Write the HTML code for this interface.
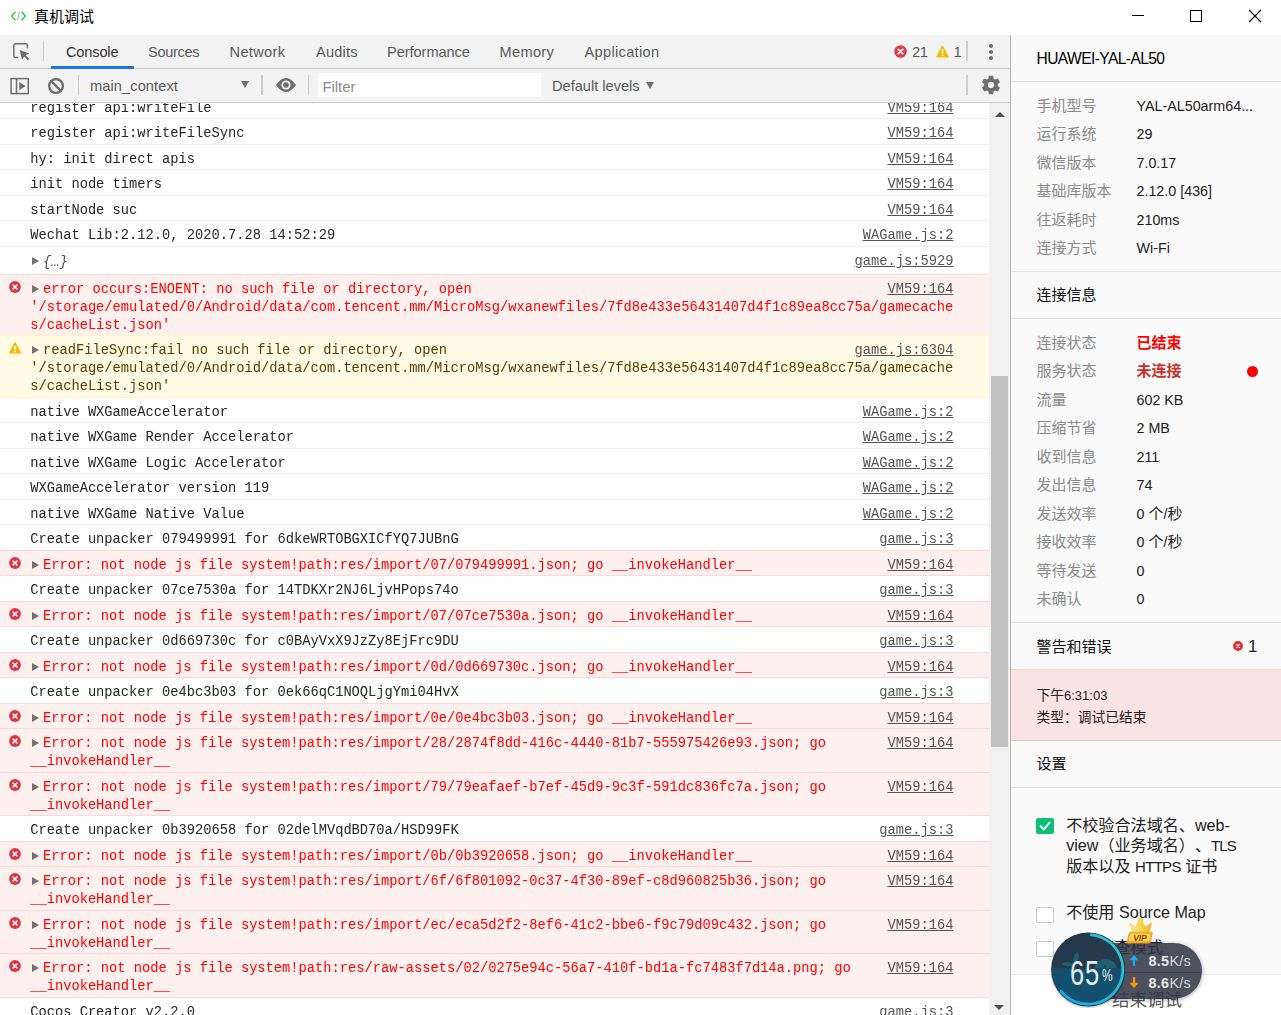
<!DOCTYPE html>
<html lang="zh-CN">
<head>
<meta charset="utf-8">
<title>真机调试</title>
<style>
*{box-sizing:border-box;margin:0;padding:0}
html,body{width:1281px;height:1015px;overflow:hidden;background:#fff}
body{position:relative;text-spacing-trim:space-all;font-family:"Liberation Sans","Noto Sans CJK SC",sans-serif;color:#000}
.abs{position:absolute}
.t{position:absolute;white-space:nowrap;line-height:20px}
/* title bar */
#titlebar{position:absolute;left:0;top:0;width:1281px;height:35px;background:#fff}
/* devtools */
#dt{position:absolute;left:0;top:35px;width:1010px;height:980px;background:#fff;overflow:hidden}
#tabbar{position:absolute;left:0;top:0;width:1010px;height:34px;background:#f3f3f3;border-bottom:1px solid #ccc}
#toolbar{position:absolute;left:0;top:34px;width:1010px;height:34px;background:#f3f3f3;border-bottom:1px solid #ccc}
.tab{position:absolute;top:7px;font-size:14.6px;line-height:20px;color:#5a5a5a;white-space:nowrap}
.sep{position:absolute;width:1px;background:#ccc}
#msgs{position:absolute;left:0;top:68px;width:989px;height:912px;overflow:hidden;will-change:transform;
 font-family:"Liberation Mono",monospace;font-size:13.745px;line-height:18px;color:#262626}
.row{position:absolute;left:0;width:989px;border-top:1px solid #f0f0f0;background:#fff}
.row.e{background:#fff0f0;border-top-color:#ffd6d6;color:#ff0000}
.row.w{background:#fffbe5;border-top-color:#fff5c2;color:#5c3c00}
.row.ae{border-top-color:#ffd6d6}
.row.aw{border-top-color:#fff5c2}
.row .m{position:absolute;left:30.2px;top:6px;white-space:pre}
.row .a{position:absolute;right:35.6px;top:6px;color:#545454;text-decoration:underline;white-space:pre}
.row .tri{position:absolute;left:32.4px;top:9.8px;width:0;height:0;border-left:7.2px solid #727272;border-top:4.4px solid transparent;border-bottom:4.4px solid transparent}
.row .ei{position:absolute;left:9px;top:5.9px;width:12px;height:12px}
#sbar{position:absolute;left:989px;top:68px;width:21px;height:912px;background:#f1f1f1}
#dtborder{position:absolute;left:1010px;top:35px;width:1px;height:980px;background:#b4b4b4}
/* right panel */
#rp{position:absolute;left:1011px;top:35px;width:270px;height:980px;background:#fafafa;overflow:hidden;font-size:15px;color:#222}
#rp .hl{position:absolute;left:0;width:270px;height:1px;background:#e4e4e4}
#rp .k{position:absolute;left:25.5px;color:#8a8a8a;white-space:nowrap;line-height:20px;font-size:15px}
#rp .v{position:absolute;left:125.5px;color:#222;white-space:nowrap;line-height:20px;font-size:14.3px}
#rp .h{position:absolute;left:25.5px;color:#111;white-space:nowrap;line-height:20px;font-size:15px}
</style>
</head>
<body>
<div id="titlebar">
  <svg class="abs" style="left:10.4px;top:9px" width="17" height="14" viewBox="0 0 17 14">
    <path d="M5 3.2 L1.6 7 L5 10.8" fill="none" stroke="#3fc24a" stroke-width="1.5" stroke-linecap="round" stroke-linejoin="round"/>
    <path d="M12 3.2 L15.4 7 L12 10.8" fill="none" stroke="#3fc24a" stroke-width="1.5" stroke-linecap="round" stroke-linejoin="round"/>
    <path d="M9.4 3.4 L7.6 10.6" fill="none" stroke="#7ad77f" stroke-width="1.2" stroke-linecap="round"/>
  </svg>
  <div class="t" style="left:34px;top:6.7px;font-size:15px;color:#000">真机调试</div>
  <div class="abs" style="left:1132px;top:15px;width:12px;height:1px;background:#000"></div>
  <div class="abs" style="left:1190px;top:10px;width:12px;height:12px;border:1px solid #000"></div>
  <svg class="abs" style="left:1248px;top:9px" width="14" height="14" viewBox="0 0 14 14"><path d="M1 1 L13 13 M13 1 L1 13" stroke="#000" stroke-width="1.1" fill="none"/></svg>
</div>
<div id="dt">
 <div id="tabbar">
  <svg class="abs" style="left:12px;top:7px" width="19" height="19" viewBox="0 0 19 19">
    <path d="M6.4 15.4 H3.4 Q1.8 15.4 1.8 13.8 V3.4 Q1.8 1.8 3.4 1.8 H13.8 Q15.4 1.8 15.4 3.4 V6.4" fill="none" stroke="#6e6e6e" stroke-width="1.5"/>
    <path d="M7.6 8 L17.4 11.4 L13.6 13.1 L17.2 16.9 L15.8 18.2 L12.2 14.4 L10 17.6 Z" fill="#6e6e6e"/>
  </svg>
  <div class="sep" style="left:43px;top:6px;height:20px"></div>
  <div class="tab" style="left:66px;color:#333;letter-spacing:-0.17px">Console</div>
  <div class="tab" style="left:148px;letter-spacing:-0.34px">Sources</div>
  <div class="tab" style="left:229.5px;letter-spacing:0.34px">Network</div>
  <div class="tab" style="left:316px;letter-spacing:0.18px">Audits</div>
  <div class="tab" style="left:387px;letter-spacing:-0.06px">Performance</div>
  <div class="tab" style="left:499.5px;letter-spacing:0.33px">Memory</div>
  <div class="tab" style="left:584.5px;letter-spacing:0.32px">Application</div>
  <div class="abs" style="left:51px;top:31px;width:83px;height:3px;background:#1a73e8"></div>
  <!-- error / warning counters -->
  <svg class="abs" style="left:894px;top:10px" width="13" height="13" viewBox="0 0 13 13">
    <circle cx="6.5" cy="6.5" r="6.3" fill="#e23b46"/>
    <path d="M4.3 4.3 L8.7 8.7 M8.7 4.3 L4.3 8.7" stroke="#fff" stroke-width="1.7" stroke-linecap="round"/>
  </svg>
  <div class="tab" style="left:912px;font-size:14.8px;letter-spacing:-0.6px;color:#5a5a5a">21</div>
  <svg class="abs" style="left:935.5px;top:9.5px" width="13" height="13" viewBox="0 0 13 13">
    <path d="M6.5 0.8 L12.4 11.9 H0.6 Z" fill="#f4bd00" stroke="#f4bd00" stroke-width="1" stroke-linejoin="round"/>
    <rect x="5.7" y="4.2" width="1.6" height="4.2" fill="#fff"/>
    <rect x="5.7" y="9.4" width="1.6" height="1.6" fill="#fff"/>
  </svg>
  <div class="tab" style="left:953.5px;font-size:14.8px;color:#5a5a5a">1</div>
  <div class="sep" style="left:966px;top:6px;height:20px;width:2px;background:#d0d0d0"></div>
  <div class="abs" style="left:989px;top:8.5px;width:4px;height:4px;border-radius:50%;background:#6e6e6e"></div>
  <div class="abs" style="left:989px;top:14.5px;width:4px;height:4px;border-radius:50%;background:#6e6e6e"></div>
  <div class="abs" style="left:989px;top:20.5px;width:4px;height:4px;border-radius:50%;background:#6e6e6e"></div>
 </div>
 <div id="toolbar">
  <!-- sidebar toggle -->
  <svg class="abs" style="left:9px;top:7.5px" width="21" height="18" viewBox="0 0 21 18">
    <rect x="2.1" y="1.6" width="17.2" height="15" fill="none" stroke="#6e6e6e" stroke-width="1.5"/>
    <path d="M7.5 1.6 V16.6" stroke="#6e6e6e" stroke-width="1.5"/>
    <path d="M10.3 5 L16.5 9.1 L10.3 13.2 Z" fill="#6e6e6e"/>
  </svg>
  <!-- clear -->
  <svg class="abs" style="left:47px;top:7.5px" width="18" height="18" viewBox="0 0 18 18">
    <circle cx="9" cy="9" r="6.9" fill="none" stroke="#6e6e6e" stroke-width="2.4"/>
    <path d="M4.2 4.2 L13.8 13.8" stroke="#6e6e6e" stroke-width="2.4"/>
  </svg>
  <div class="sep" style="left:78px;top:6px;height:20px"></div>
  <div class="tab" style="left:90px;top:7px;color:#5a5a5a;font-size:14.6px;letter-spacing:0.1px">main_context</div>
  <div class="abs" style="left:241px;top:12.2px;width:0;height:0;border-top:7.4px solid #6e6e6e;border-left:4.7px solid transparent;border-right:4.7px solid transparent"></div>
  <div class="sep" style="left:261px;top:6px;height:20px;width:2px"></div>
  <!-- eye -->
  <svg class="abs" style="left:274.5px;top:7.2px" width="22" height="18" viewBox="0 0 22 18">
    <path d="M1 9 Q6 2 11 2 Q16 2 21 9 Q16 16 11 16 Q6 16 1 9 Z" fill="#6e6e6e"/>
    <circle cx="11" cy="9" r="4.6" fill="#f3f3f3"/>
    <circle cx="11" cy="9" r="2.8" fill="#6e6e6e"/>
  </svg>
  <div class="sep" style="left:308px;top:6px;height:20px"></div>
  <div class="abs" style="left:318px;top:4px;width:223px;height:24px;background:#fff"></div>
  <div class="tab" style="left:322.5px;top:7.5px;color:#8a8a8a;font-size:14.8px">Filter</div>
  <div class="tab" style="left:552px;top:7px;color:#5a5a5a;font-size:14.6px">Default levels</div>
  <div class="abs" style="left:646px;top:12.6px;width:0;height:0;border-top:7.6px solid #6e6e6e;border-left:4.5px solid transparent;border-right:4.5px solid transparent"></div>
  <div class="sep" style="left:966px;top:6px;height:20px;width:2px;background:#d0d0d0"></div>
  <!-- gear -->
  <svg class="abs" style="left:979.6px;top:5px" width="22" height="22" viewBox="0 0 24 24">
    <path fill="#6e6e6e" d="M19.43 12.98c.04-.32.07-.64.07-.98s-.03-.66-.07-.98l2.11-1.65c.19-.15.24-.42.12-.64l-2-3.46c-.12-.22-.39-.3-.61-.22l-2.49 1c-.52-.4-1.08-.73-1.69-.98l-.38-2.65C14.46 2.18 14.25 2 14 2h-4c-.25 0-.46.18-.49.42l-.38 2.65c-.61.25-1.17.59-1.69.98l-2.49-1c-.23-.09-.49 0-.61.22l-2 3.46c-.13.22-.07.49.12.64l2.11 1.65c-.04.32-.07.65-.07.98s.03.66.07.98l-2.11 1.65c-.19.15-.24.42-.12.64l2 3.46c.12.22.39.3.61.22l2.49-1c.52.4 1.08.73 1.69.98l.38 2.65c.03.24.24.42.49.42h4c.25 0 .46-.18.49-.42l.38-2.65c.61-.25 1.17-.59 1.69-.98l2.49 1c.23.09.49 0 .61-.22l2-3.46c.12-.22.07-.49-.12-.64l-2.11-1.65zM12 15.5c-1.93 0-3.500-1.570-3.500-3.500s1.570-3.500 3.500-3.500 3.500 1.570 3.500 3.500-1.570 3.500-3.500 3.500z"/>
  </svg>
 </div>
<div id="msgs">
<div class="row" style="top:-10px;height:25px"><div class="m">register api:writeFile</div><span class="a">VM59:164</span></div>
<div class="row" style="top:15px;height:26px"><div class="m">register api:writeFileSync</div><span class="a">VM59:164</span></div>
<div class="row" style="top:41px;height:25px"><div class="m">hy: init direct apis</div><span class="a">VM59:164</span></div>
<div class="row" style="top:66px;height:26px"><div class="m">init node timers</div><span class="a">VM59:164</span></div>
<div class="row" style="top:92px;height:25px"><div class="m">startNode suc</div><span class="a">VM59:164</span></div>
<div class="row" style="top:117px;height:26px"><div class="m">Wechat Lib:2.12.0, 2020.7.28 14:52:29</div><span class="a">WAGame.js:2</span></div>
<div class="row" style="top:143px;height:28px"><i class="tri"></i><div class="m"><span style="display:inline-block;width:12.9px"></span><i style="position:relative;top:1px;color:#4d4d4d">{…}</i></div><span class="a">game.js:5929</span></div>
<div class="row e" style="top:171px;height:61px"><svg class="ei" viewBox="0 0 12 12"><circle cx="6" cy="6" r="5.9" fill="#dc3545"/><path d="M4.1 4.1 L7.9 7.9 M7.9 4.1 L4.1 7.9" stroke="#fff" stroke-width="1.5" stroke-linecap="round"/></svg><i class="tri"></i><div class="m"><span style="display:inline-block;width:12.9px"></span>error occurs:ENOENT: no such file or directory, open<br>'/storage/emulated/0/Android/data/com.tencent.mm/MicroMsg/wxanewfiles/7fd8e433e56431407d4f1c89ea8cc75a/gamecache<br>s/cacheList.json'</div><span class="a">VM59:164</span></div>
<div class="row w" style="top:232px;height:62px"><svg class="ei" style="top:5.8px" viewBox="0 0 12 12"><path d="M6 0.9 L11.3 10.9 H0.7 Z" fill="#f4bd00" stroke="#f4bd00" stroke-width="1.2" stroke-linejoin="round"/><rect x="5.2" y="3.8" width="1.6" height="4" fill="#fff"/><rect x="5.2" y="8.7" width="1.6" height="1.6" fill="#fff"/></svg><i class="tri"></i><div class="m"><span style="display:inline-block;width:12.9px"></span>readFileSync:fail no such file or directory, open<br>'/storage/emulated/0/Android/data/com.tencent.mm/MicroMsg/wxanewfiles/7fd8e433e56431407d4f1c89ea8cc75a/gamecache<br>s/cacheList.json'</div><span class="a">game.js:6304</span></div>
<div class="row aw" style="top:294px;height:25px"><div class="m">native WXGameAccelerator</div><span class="a">WAGame.js:2</span></div>
<div class="row" style="top:319px;height:26px"><div class="m">native WXGame Render Accelerator</div><span class="a">WAGame.js:2</span></div>
<div class="row" style="top:345px;height:25px"><div class="m">native WXGame Logic Accelerator</div><span class="a">WAGame.js:2</span></div>
<div class="row" style="top:370px;height:26px"><div class="m">WXGameAccelerator version 119</div><span class="a">WAGame.js:2</span></div>
<div class="row" style="top:396px;height:25px"><div class="m">native WXGame Native Value</div><span class="a">WAGame.js:2</span></div>
<div class="row" style="top:421px;height:26px"><div class="m">Create unpacker 079499991 for 6dkeWRTOBGXICfYQ7JUBnG</div><span class="a">game.js:3</span></div>
<div class="row e" style="top:447px;height:25px"><svg class="ei" viewBox="0 0 12 12"><circle cx="6" cy="6" r="5.9" fill="#dc3545"/><path d="M4.1 4.1 L7.9 7.9 M7.9 4.1 L4.1 7.9" stroke="#fff" stroke-width="1.5" stroke-linecap="round"/></svg><i class="tri"></i><div class="m"><span style="display:inline-block;width:12.9px"></span>Error: not node js file system!path:res/import/07/079499991.json; go __invokeHandler__</div><span class="a">VM59:164</span></div>
<div class="row ae" style="top:472px;height:26px"><div class="m">Create unpacker 07ce7530a for 14TDKXr2NJ6LjvHPops74o</div><span class="a">game.js:3</span></div>
<div class="row e" style="top:498px;height:25px"><svg class="ei" viewBox="0 0 12 12"><circle cx="6" cy="6" r="5.9" fill="#dc3545"/><path d="M4.1 4.1 L7.9 7.9 M7.9 4.1 L4.1 7.9" stroke="#fff" stroke-width="1.5" stroke-linecap="round"/></svg><i class="tri"></i><div class="m"><span style="display:inline-block;width:12.9px"></span>Error: not node js file system!path:res/import/07/07ce7530a.json; go __invokeHandler__</div><span class="a">VM59:164</span></div>
<div class="row ae" style="top:523px;height:26px"><div class="m">Create unpacker 0d669730c for c0BAyVxX9JzZy8EjFrc9DU</div><span class="a">game.js:3</span></div>
<div class="row e" style="top:549px;height:25px"><svg class="ei" viewBox="0 0 12 12"><circle cx="6" cy="6" r="5.9" fill="#dc3545"/><path d="M4.1 4.1 L7.9 7.9 M7.9 4.1 L4.1 7.9" stroke="#fff" stroke-width="1.5" stroke-linecap="round"/></svg><i class="tri"></i><div class="m"><span style="display:inline-block;width:12.9px"></span>Error: not node js file system!path:res/import/0d/0d669730c.json; go __invokeHandler__</div><span class="a">VM59:164</span></div>
<div class="row ae" style="top:574px;height:26px"><div class="m">Create unpacker 0e4bc3b03 for 0ek66qC1NOQLjgYmi04HvX</div><span class="a">game.js:3</span></div>
<div class="row e" style="top:600px;height:25px"><svg class="ei" viewBox="0 0 12 12"><circle cx="6" cy="6" r="5.9" fill="#dc3545"/><path d="M4.1 4.1 L7.9 7.9 M7.9 4.1 L4.1 7.9" stroke="#fff" stroke-width="1.5" stroke-linecap="round"/></svg><i class="tri"></i><div class="m"><span style="display:inline-block;width:12.9px"></span>Error: not node js file system!path:res/import/0e/0e4bc3b03.json; go __invokeHandler__</div><span class="a">VM59:164</span></div>
<div class="row e" style="top:625px;height:44px"><svg class="ei" viewBox="0 0 12 12"><circle cx="6" cy="6" r="5.9" fill="#dc3545"/><path d="M4.1 4.1 L7.9 7.9 M7.9 4.1 L4.1 7.9" stroke="#fff" stroke-width="1.5" stroke-linecap="round"/></svg><i class="tri"></i><div class="m"><span style="display:inline-block;width:12.9px"></span>Error: not node js file system!path:res/import/28/2874f8dd-416c-4440-81b7-555975426e93.json; go<br>__invokeHandler__</div><span class="a">VM59:164</span></div>
<div class="row e" style="top:669px;height:43px"><svg class="ei" viewBox="0 0 12 12"><circle cx="6" cy="6" r="5.9" fill="#dc3545"/><path d="M4.1 4.1 L7.9 7.9 M7.9 4.1 L4.1 7.9" stroke="#fff" stroke-width="1.5" stroke-linecap="round"/></svg><i class="tri"></i><div class="m"><span style="display:inline-block;width:12.9px"></span>Error: not node js file system!path:res/import/79/79eafaef-b7ef-45d9-9c3f-591dc836fc7a.json; go<br>__invokeHandler__</div><span class="a">VM59:164</span></div>
<div class="row ae" style="top:712px;height:26px"><div class="m">Create unpacker 0b3920658 for 02delMVqdBD70a/HSD99FK</div><span class="a">game.js:3</span></div>
<div class="row e" style="top:738px;height:25px"><svg class="ei" viewBox="0 0 12 12"><circle cx="6" cy="6" r="5.9" fill="#dc3545"/><path d="M4.1 4.1 L7.9 7.9 M7.9 4.1 L4.1 7.9" stroke="#fff" stroke-width="1.5" stroke-linecap="round"/></svg><i class="tri"></i><div class="m"><span style="display:inline-block;width:12.9px"></span>Error: not node js file system!path:res/import/0b/0b3920658.json; go __invokeHandler__</div><span class="a">VM59:164</span></div>
<div class="row e" style="top:763px;height:44px"><svg class="ei" viewBox="0 0 12 12"><circle cx="6" cy="6" r="5.9" fill="#dc3545"/><path d="M4.1 4.1 L7.9 7.9 M7.9 4.1 L4.1 7.9" stroke="#fff" stroke-width="1.5" stroke-linecap="round"/></svg><i class="tri"></i><div class="m"><span style="display:inline-block;width:12.9px"></span>Error: not node js file system!path:res/import/6f/6f801092-0c37-4f30-89ef-c8d960825b36.json; go<br>__invokeHandler__</div><span class="a">VM59:164</span></div>
<div class="row e" style="top:807px;height:43px"><svg class="ei" viewBox="0 0 12 12"><circle cx="6" cy="6" r="5.9" fill="#dc3545"/><path d="M4.1 4.1 L7.9 7.9 M7.9 4.1 L4.1 7.9" stroke="#fff" stroke-width="1.5" stroke-linecap="round"/></svg><i class="tri"></i><div class="m"><span style="display:inline-block;width:12.9px"></span>Error: not node js file system!path:res/import/ec/eca5d2f2-8ef6-41c2-bbe6-f9c79d09c432.json; go<br>__invokeHandler__</div><span class="a">VM59:164</span></div>
<div class="row e" style="top:850px;height:44px"><svg class="ei" viewBox="0 0 12 12"><circle cx="6" cy="6" r="5.9" fill="#dc3545"/><path d="M4.1 4.1 L7.9 7.9 M7.9 4.1 L4.1 7.9" stroke="#fff" stroke-width="1.5" stroke-linecap="round"/></svg><i class="tri"></i><div class="m"><span style="display:inline-block;width:12.9px"></span>Error: not node js file system!path:res/raw-assets/02/0275e94c-56a7-410f-bd1a-fc7483f7d14a.png; go<br>__invokeHandler__</div><span class="a">VM59:164</span></div>
<div class="row ae" style="top:894px;height:26px"><div class="m">Cocos Creator v2.2.0</div><span class="a">game.js:3</span></div>
</div>
<div id="sbar">
 <div class="abs" style="left:5.5px;top:8.5px;width:0;height:0;border-bottom:5.5px solid #505050;border-left:5px solid transparent;border-right:5px solid transparent"></div>
 <div class="abs" style="left:2px;top:273px;width:17px;height:371px;background:#c1c1c1"></div>
 <div class="abs" style="left:5px;top:902px;width:0;height:0;border-top:5.5px solid #505050;border-left:5px solid transparent;border-right:5px solid transparent"></div>
</div>
</div>
<div id="dtborder"></div>
<div id="rp">
 <div class="h" style="top:14.3px;font-size:15.6px;letter-spacing:-0.6px;color:#000">HUAWEI-YAL-AL50</div>
 <div class="hl" style="top:46px"></div>
 <div class="k" style="top:61px">手机型号</div><div class="v" style="top:61px">YAL-AL50arm64...</div>
 <div class="k" style="top:89px">运行系统</div><div class="v" style="top:89px">29</div>
 <div class="k" style="top:117.5px">微信版本</div><div class="v" style="top:117.5px">7.0.17</div>
 <div class="k" style="top:146px">基础库版本</div><div class="v" style="top:146px">2.12.0 [436]</div>
 <div class="k" style="top:174.5px">往返耗时</div><div class="v" style="top:174.5px">210ms</div>
 <div class="k" style="top:202.5px">连接方式</div><div class="v" style="top:202.5px">Wi-Fi</div>
 <div class="hl" style="top:236px"></div>
 <div class="h" style="top:250px">连接信息</div>
 <div class="hl" style="top:283px"></div>
 <div class="k" style="top:298px">连接状态</div><div class="v" style="top:298px;color:#f00;font-weight:bold;font-size:15px">已结束</div>
 <div class="k" style="top:326px">服务状态</div><div class="v" style="top:326px;color:#c9302c;font-weight:bold;font-size:15px">未连接</div>
 <div class="abs" style="left:235.5px;top:330.5px;width:11px;height:11px;border-radius:50%;background:#f00"></div>
 <div class="k" style="top:355px">流量</div><div class="v" style="top:355px">602 KB</div>
 <div class="k" style="top:383px">压缩节省</div><div class="v" style="top:383px">2 MB</div>
 <div class="k" style="top:411.5px">收到信息</div><div class="v" style="top:411.5px">211</div>
 <div class="k" style="top:439.5px">发出信息</div><div class="v" style="top:439.5px">74</div>
 <div class="k" style="top:468.5px">发送效率</div><div class="v" style="top:468.5px">0 <span style="font-size:15px">个</span>/<span style="font-size:15px">秒</span></div>
 <div class="k" style="top:496.5px">接收效率</div><div class="v" style="top:496.5px">0 <span style="font-size:15px">个</span>/<span style="font-size:15px">秒</span></div>
 <div class="k" style="top:525.5px">等待发送</div><div class="v" style="top:525.5px">0</div>
 <div class="k" style="top:553.5px">未确认</div><div class="v" style="top:553.5px">0</div>
 <div class="hl" style="top:587px"></div>
 <div class="h" style="top:601.5px">警告和错误</div>
 <svg class="abs" style="left:222px;top:606px" width="10" height="10" viewBox="0 0 10 10"><circle cx="5" cy="5" r="4.9" fill="#e8262d"/><path d="M3.5 3.5 L6.5 6.5 M6.5 3.5 L3.5 6.5" stroke="#fff" stroke-width="1.3" stroke-linecap="round"/></svg>
 <div class="t" style="left:237px;top:602px;font-size:17px;color:#222">1</div>
 <div class="abs" style="left:0;top:634px;width:270px;height:72px;background:#fce4e4;border-top:1px solid #f3d6d6;border-bottom:1px solid #e8c9c9"></div>
 <div class="t" style="left:25.5px;top:651px;font-size:13.75px;color:#222">下午<span style="font-size:13px">6:31:03</span></div>
 <div class="t" style="left:25.5px;top:673px;font-size:13.75px;color:#222">类型：调试已结束</div>
 <div class="h" style="top:718.6px">设置</div>
 <div class="hl" style="top:752px"></div>
 <!-- settings -->
 <div class="abs" style="left:25px;top:783px;width:18px;height:16px;border-radius:2px;background:#0bc074"></div>
 <svg class="abs" style="left:25px;top:783px" width="18" height="16" viewBox="0 0 18 16"><path d="M4.6 8.2 L7.8 11.3 L13.6 4.6" fill="none" stroke="#fff" stroke-width="1.9" stroke-linecap="round" stroke-linejoin="round"/></svg>
 <div class="t" style="left:55.2px;top:779.7px;font-size:16.1px;line-height:20.7px;color:#222">不校验合法域名、web-</div>
 <div class="t" style="left:55.2px;top:800.0px;font-size:16.1px;line-height:20.7px;color:#222">view（业务域名）、<span style="font-size:15px;letter-spacing:-0.9px;line-height:1">TLS</span></div>
 <div class="t" style="left:55.2px;top:821.1px;font-size:16.1px;line-height:20.7px;color:#222">版本以及 <span style="font-size:15px;letter-spacing:-0.7px;line-height:1">HTTPS</span> 证书</div>
 <div class="abs" style="left:25px;top:871.5px;width:18px;height:16px;border-radius:2px;background:#fff;border:1px solid #c8c8c8"></div>
 <div class="t" style="left:55.2px;top:867.2px;font-size:16.1px;line-height:20.7px;color:#222">不使用 Source Map</div>
 <div class="abs" style="left:25px;top:906px;width:18px;height:16px;border-radius:2px;background:#fff;border:1px solid #c8c8c8"></div>
 <div class="t" style="left:55.2px;top:902.4px;font-size:16.1px;line-height:20.7px;color:#222">自动审查模式</div>
 <div class="abs" style="left:0;top:939px;width:270px;height:41px;background:#fff;border-top:1px solid #ebebeb"></div>
 <div class="t" style="left:101px;top:953px;font-size:17.5px;line-height:24px;color:#5a5a5a">结束调试</div>
</div>
<!-- floating monitor widget -->
<div id="widget" class="abs" style="left:1040px;top:905px;width:180px;height:110px">
 <!-- pill -->
 <div class="abs" style="left:50px;top:38px;width:112px;height:56.2px;border-radius:0 28.1px 28.1px 0;background:rgba(46,52,66,0.86);box-shadow:0 1px 4px rgba(0,0,0,0.35)"></div>
 <div class="abs" style="left:84px;top:67px;width:77px;height:1px;background:rgba(30,34,44,0.3)"></div>
 <!-- arrows -->
 <svg class="abs" style="left:88px;top:49px" width="12" height="13" viewBox="0 0 12 13"><path d="M6 1 L10.6 6.2 H7.1 V12 H4.9 V6.2 H1.4 Z" fill="#1eaaf1"/></svg>
 <svg class="abs" style="left:88px;top:71px" width="12" height="13" viewBox="0 0 12 13"><path d="M6 12 L10.6 6.8 H7.1 V1 H4.9 V6.8 H1.4 Z" fill="#ff9500"/></svg>
 <div class="t" style="left:108.5px;top:46px;font-size:14.4px;line-height:20px;color:#e8e8e8;font-weight:bold;letter-spacing:0.3px">8.5<span style="font-weight:normal;color:#d4d6da">K/s</span></div>
 <div class="t" style="left:108.5px;top:68px;font-size:14.4px;line-height:20px;color:#e8e8e8;font-weight:bold;letter-spacing:0.3px">8.6<span style="font-weight:normal;color:#d4d6da">K/s</span></div>
 <!-- crown -->
 <svg class="abs" style="left:85px;top:10px" width="30" height="30" viewBox="0 0 30 30">
  <defs><linearGradient id="cg" x1="0" y1="0" x2="1" y2="0"><stop offset="0" stop-color="#ffe9a0"/><stop offset="0.5" stop-color="#ffd24a"/><stop offset="1" stop-color="#f5ae1c"/></linearGradient></defs>
  <path d="M7.6 17.4 L5.2 8.2 L10.8 12 L13.6 6.6 Q12.6 4.6 14.4 3.3 Q16.6 2.6 17.6 4.6 Q18 5.8 17.2 6.8 L20.6 12 L26.8 7.6 L24.2 17.4 Z" fill="url(#cg)" stroke="#f2b535" stroke-width="0.5" stroke-linejoin="round"/>
  <path d="M5 17 H26.6 Q28 17.2 27.6 18.8 L25.8 27 Q25.4 28.4 24 28.4 H2.8 Q1.2 28.2 1.6 26.8 L3.6 18.2 Q4 17 5 17 Z" fill="#f6a81c"/>
  <path d="M6.4 18.6 H24.6 Q25.6 18.7 25.3 19.8 L24.2 25.2 Q24 26.2 23 26.2 H4.8 Q3.8 26.1 4 25.1 L5.3 19.5 Q5.5 18.6 6.4 18.6 Z" fill="#ffd65c"/>
  <text x="14.8" y="25.6" font-family="Liberation Sans, sans-serif" font-size="8.6" font-weight="bold" font-style="italic" fill="#8a4108" text-anchor="middle" letter-spacing="-0.2">VIP</text>
 </svg>
 <!-- circle -->
 <svg class="abs" style="left:8px;top:25px" width="80" height="80" viewBox="0 0 80 80">
  <defs>
   <clipPath id="cc"><circle cx="40.2" cy="39.5" r="36.4"/></clipPath>
   <linearGradient id="rg" x1="1" y1="0" x2="0" y2="1"><stop offset="0" stop-color="#27cfd0"/><stop offset="1" stop-color="#1ba4e6"/></linearGradient>
  </defs>
  <circle cx="40" cy="40.5" r="37.5" fill="rgba(0,0,0,0.18)"/>
  <circle cx="40.2" cy="39.5" r="37" fill="#22374a"/>
  <g clip-path="url(#cc)">
   <rect x="0" y="0" width="80" height="39" fill="#24394b"/>
   <path d="M26.6 34.6 Q23 28 29.4 21.4 Q32.6 28 28.6 34.6 Z" fill="#1f5f70"/>
   <path d="M13.2 34 Q18 30.4 24.6 33.6 Q27 34.6 28.4 34.8 Q22 38.4 13.2 34 Z" fill="#1f5f70"/>
   <path d="M46 38.6 Q48 32 53 30 Q58.4 28 63.4 30.4 Q68 33 69.2 38.6 Z" fill="#1f5f70"/>
   <circle cx="57.3" cy="36.4" r="0.9" fill="#1b3446"/>
   <rect x="0" y="38.4" width="80" height="42" fill="#14506e"/>
  </g>
  <path d="M43.2 4.9 A34.7 34.7 0 1 1 13 61.1" fill="none" stroke="url(#rg)" stroke-width="2.7" stroke-linecap="round"/>
 </svg>
 <div class="t" style="left:30.4px;top:49.6px;font-size:35.4px;line-height:36px;color:#e4eaee;transform:scaleX(0.72);transform-origin:0 50%;letter-spacing:1.2px">65</div>
 <div class="t" style="left:61.5px;top:60.5px;font-size:17px;line-height:20px;color:#e6ecef;transform:scaleX(0.7);transform-origin:0 50%">%</div>
</div>
</body>
</html>
